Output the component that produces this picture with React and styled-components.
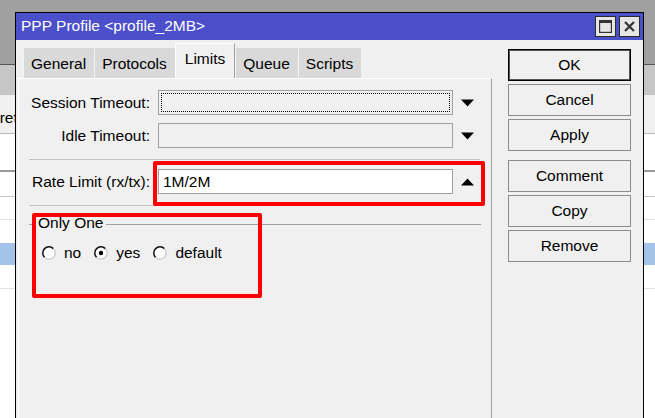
import React from "react";
import styled, { createGlobalStyle } from "styled-components";

const GlobalStyle = createGlobalStyle`
  html, body { margin: 0; padding: 0; }
  body {
    width: 655px; height: 418px; overflow: hidden;
    font-family: "Liberation Sans", Arial, sans-serif;
    font-size: 15.5px; color: #000;
  }
`;

const Desktop = styled.div`
  position: relative;
  width: 655px;
  height: 418px;
  overflow: hidden;
  background: #fff;
`;

const TopGray = styled.div`
  height: 64px;
  background: #a0a0a0;
  border-bottom: 1px solid #555;
`;

const ListHeader = styled.div`
  height: 30px;
  background: #c6c6c6;
`;

const ListRow = styled.div`
  height: ${(p) => p.$h}px;
  background: ${(p) => p.$bg || "#fff"};
  border-bottom: ${(p) => (p.$line ? `${p.$lw || 1}px solid ${p.$line}` : "none")};
  display: flex;
  align-items: center;
  overflow: hidden;
  white-space: nowrap;
`;

const CutText = styled.span`
  margin-left: -27px;
  margin-top: 8px;
`;

const Window = styled.div`
  position: absolute;
  left: 15px;
  top: 12px;
  width: 627px;
  height: 420px;
  border: 1px solid #000;
  background: #f0f0f0;
  display: flex;
  flex-direction: column;
`;

const TitleBar = styled.div`
  height: 27px;
  flex: none;
  background: #4b4fc9;
  display: flex;
  align-items: center;
  padding: 0 3px 0 5px;
  color: #fff;
`;

const Title = styled.div`
  flex: 1;
  font-size: 15.5px;
  padding-bottom: 1px;
`;

const TitleButton = styled.div`
  width: 19px;
  height: 19px;
  border: 1px solid #2a2a2a;
  background: #e6e6e6;
  margin-left: 3px;
  display: flex;
  align-items: center;
  justify-content: center;
`;

const Main = styled.div`
  flex: 1;
  display: flex;
`;

const LeftCol = styled.div`
  width: 474px;
  padding-left: 2px;
  display: flex;
  flex-direction: column;
`;

const TabRow = styled.div`
  height: 38px;
  display: flex;
  align-items: flex-end;
  margin-left: 5px;
`;

const Tab = styled.div`
  height: ${(p) => (p.$active ? 35 : 30)}px;
  box-sizing: border-box;
  padding: ${(p) => (p.$active ? "0 9px 4px" : "0 7px")};
  display: flex;
  align-items: center;
  background: ${(p) => (p.$active ? "#f0f0f0" : "#d9d9d9")};
  border-left: 1px solid ${(p) => (p.$active ? "#fff" : "#f4f4f4")};
  border-top: 1px solid ${(p) => (p.$active ? "#fff" : "#d9d9d9")};
  border-right: 1px solid ${(p) => (p.$active ? "#a0a0a0" : "#d9d9d9")};
  color: #000;
`;

const Panel = styled.div`
  flex: 1;
  border-top: 1px solid #fff;
  border-left: 1px solid #fff;
  border-right: 1px solid #a0a0a0;
  padding: 11px 10px 0;
`;

const FormGrid = styled.div`
  display: grid;
  grid-template-columns: 121px 295px 13px;
  column-gap: 8px;
  row-gap: 8px;
  align-items: center;
`;

const Label = styled.div`
  text-align: right;
  white-space: nowrap;
`;

const Field = styled.div`
  height: 25px;
  box-sizing: border-box;
  border: 1px solid #a0a0a0;
  background: ${(p) => (p.$white ? "#fff" : "#f0f0f0")};
  padding: 2px;
  display: flex;
  align-items: center;
`;

const FocusBox = styled.div`
  flex: 1;
  align-self: stretch;
  border: 1px dotted #000;
`;

const FieldText = styled.span`
  padding-left: 2px;
`;

const Separator = styled.div`
  grid-column: 1 / -1;
  height: 1px;
  background: #c4c4c4;
  margin: ${(p) => p.$m};
  margin-right: -6px;
`;

const Group = styled.div`
  margin-top: 9px;
`;

const Legend = styled.div`
  display: flex;
  align-items: center;
  height: 18px;
  &::before {
    content: "";
    width: 6px;
    height: 1px;
    background: #a0a0a0;
  }
  &::after {
    content: "";
    flex: 1;
    height: 1px;
    background: #a0a0a0;
  }
`;

const LegendText = styled.span`
  padding: 0 3px 2px;
`;

const RadioRow = styled.div`
  display: flex;
  align-items: center;
  margin-top: 13px;
  padding-left: 13px;
  height: 14px;
`;

const RadioItem = styled.label`
  display: flex;
  align-items: center;
  margin-right: 13px;
  gap: 8px;
  line-height: 14px;
`;

const RightCol = styled.div`
  padding: 9px 0 0 16px;
  display: flex;
  flex-direction: column;
`;

const Button = styled.div`
  width: 123px;
  height: 32px;
  flex: none;
  box-sizing: border-box;
  border: 1px solid ${(p) => (p.$default ? "#000" : "#8c8c8c")};
  box-shadow: ${(p) => (p.$default ? "inset 0 0 0 1px #555" : "none")};
  background: #f0f0f0;
  display: flex;
  align-items: center;
  justify-content: center;
  margin-top: ${(p) => p.$mt ?? 3}px;
  padding-bottom: 1px;
`;

const Annotation = styled.div`
  position: absolute;
  box-sizing: border-box;
  border: 4px solid #ff0000;
  border-radius: 2px;
  left: ${(p) => p.$x}px;
  top: ${(p) => p.$y}px;
  width: ${(p) => p.$w}px;
  height: ${(p) => p.$h}px;
`;

const Arrow = ({ up }) => (
  <svg width="13" height="8" viewBox="0 0 13 8">
    {up ? <polygon points="0,7.5 6.5,0.5 13,7.5" fill="#000" /> : <polygon points="0,0.5 13,0.5 6.5,7.5" fill="#000" />}
  </svg>
);

const Radio = ({ checked }) => (
  <svg width="14" height="14" viewBox="0 0 14 14">
    <circle cx="7" cy="7" r="6.2" fill="#fff" />
    <path d="M2.6 11.4 A6.2 6.2 0 0 1 11.4 2.6" fill="none" stroke="#111" strokeWidth="1.5" />
    <path d="M11.4 2.6 A6.2 6.2 0 0 1 2.6 11.4" fill="none" stroke="#c8c8c8" strokeWidth="1.3" />
    {checked && <circle cx="7" cy="7" r="2.2" fill="#000" />}
  </svg>
);

export default function App() {
  return (
    <>
      <GlobalStyle />
      <Desktop>
        <TopGray />
        <ListHeader />
        <ListRow $h={38} $bg="#f0f0f0" $line="#b8b8b8">
          <CutText>Secret</CutText>
        </ListRow>
        <ListRow $h={36} $bg="#fff" $line="#999" $lw={2} />
        <ListRow $h={24} $line="#c4c4c4" />
        <ListRow $h={22} $line="#e4e4e4" />
        <ListRow $h={23} />
        <ListRow $h={22} $bg="#a4c3ea" />
        <ListRow $h={23} $line="#e4e4e4" />

        <Window>
          <TitleBar>
            <Title>PPP Profile &lt;profile_2MB&gt;</Title>
            <TitleButton>
              <svg width="13" height="13" viewBox="0 0 13 13">
                <rect x="0.5" y="0.5" width="12" height="12" fill="none" stroke="#333" strokeWidth="1.4" />
                <rect x="0" y="0" width="13" height="3" fill="#333" />
              </svg>
            </TitleButton>
            <TitleButton>
              <svg width="11" height="11" viewBox="0 0 11 11">
                <path d="M1 1 L10 10 M10 1 L1 10" stroke="#333" strokeWidth="2.2" />
              </svg>
            </TitleButton>
          </TitleBar>
          <Main>
            <LeftCol>
              <TabRow>
                <Tab>General</Tab>
                <Tab>Protocols</Tab>
                <Tab $active>Limits</Tab>
                <Tab>Queue</Tab>
                <Tab>Scripts</Tab>
              </TabRow>
              <Panel>
                <FormGrid>
                  <Label>Session Timeout:</Label>
                  <Field>
                    <FocusBox />
                  </Field>
                  <Arrow />
                  <Label>Idle Timeout:</Label>
                  <Field />
                  <Arrow />
                  <Separator $m="3px 0 1px" />
                  <Label>Rate Limit (rx/tx):</Label>
                  <Field $white>
                    <FieldText>1M/2M</FieldText>
                  </Field>
                  <Arrow up />
                  <Separator $m="3px 0 0" />
                </FormGrid>
                <Group>
                  <Legend>
                    <LegendText>Only One</LegendText>
                  </Legend>
                  <RadioRow>
                    <RadioItem>
                      <Radio />
                      no
                    </RadioItem>
                    <RadioItem>
                      <Radio checked />
                      yes
                    </RadioItem>
                    <RadioItem>
                      <Radio />
                      default
                    </RadioItem>
                  </RadioRow>
                </Group>
              </Panel>
            </LeftCol>
            <RightCol>
              <Button $default $mt={0}>OK</Button>
              <Button>Cancel</Button>
              <Button>Apply</Button>
              <Button $mt={9}>Comment</Button>
              <Button>Copy</Button>
              <Button>Remove</Button>
            </RightCol>
          </Main>
        </Window>

        <Annotation $x={153} $y={161} $w={332} $h={45} />
        <Annotation $x={32} $y={213} $w={230} $h={85} />
      </Desktop>
    </>
  );
}
